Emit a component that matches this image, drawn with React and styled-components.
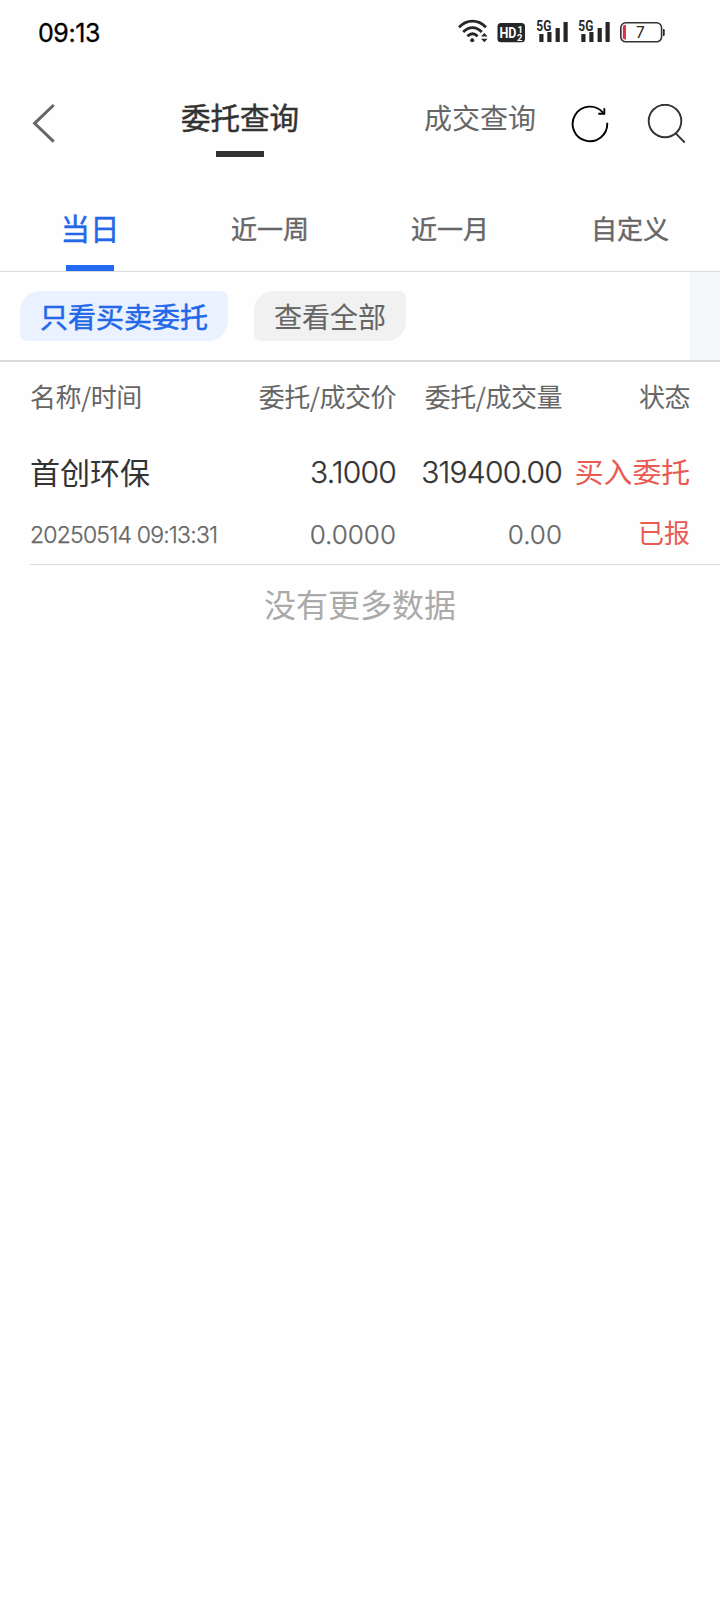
import React, {useState} from 'react';
import styled, {createGlobalStyle} from 'styled-components';

const GlobalStyle = createGlobalStyle`
    body {
        margin: 0;
        background-color: #fefefe;
    }
    * {
        box-sizing: border-box;
    }
`;

const Page = styled.div`
    width: 720px;
    min-height: 1612px;
    display: flex;
    flex-direction: column;
    background-color: #fefefe;
    color: #666;
    font-family: 'Noto Sans CJK SC', sans-serif;
    white-space: nowrap;
`;

const StatusBar = styled.div`
    height: 64px;
    padding: 0 55px 0 38px;
    display: flex;
    align-items: center;
    justify-content: space-between;
`;

const Clock = styled.span`
    padding-top: 2px;
    font-family: Inter, sans-serif;
    font-size: 25px;
    font-weight: 400;
    letter-spacing: -0.4px;
    color: #000;
    -webkit-text-stroke: 0.3px;
`;

const Header = styled.div`
    height: 120px;
    display: flex;
    align-items: center;
`;

const BackButton = styled.div`
    width: 120px;
    padding: 0 0 2px 32px;
    display: flex;
`;

const PageTab = styled.div`
    width: ${props=>props.$width};
    margin-left: ${props=>props.$gap || '0'};
    height: 100%;
    padding-top: ${props=>props.$active ? '30px' : '31px'};
    display: flex;
    flex-direction: column;
    align-items: center;
    font-size: ${props=>props.$active ? '29.5px' : '28px'};
    line-height: 44px;
    color: ${props=>props.$active ? '#333' : '#666'};
    -webkit-text-stroke: ${props=>props.$active ? '0.5px' : '0'};
`;

const PageTabLine = styled.div`
    width: 48px;
    height: 6px;
    margin-top: 13px;
    background-color: #333;
`;

const HeaderIcons = styled.div`
    display: flex;
    margin-left: 25px;
    gap: 36px;
`;

const RangeTabs = styled.div`
    height: 88px;
    display: grid;
    grid-template-columns: repeat(4, 1fr);
    border-bottom: 1px solid #d9dadc;
`;

const RangeTab = styled.div`
    display: flex;
    flex-direction: column;
    align-items: center;
    justify-content: space-between;
    padding-top: ${props=>props.$active ? '23px' : '24px'};
    font-size: ${props=>props.$active ? '29.5px' : '26px'};
    line-height: 40px;
    color: ${props=>props.$active ? '#2268e8' : '#666'};
    -webkit-text-stroke: 0.4px;
`;

const RangeLine = styled.div`
    width: 48px;
    height: 6px;
    background-color: #226af2;
`;

const FilterRow = styled.div`
    height: 90px;
    display: flex;
    align-items: center;
    gap: 26px;
    padding-left: 20px;
    border-bottom: 2px solid #d9d9d9;
`;

const Chip = styled.div`
    height: 50px;
    padding: 0 20px;
    border-radius: 20px 7px 20px 7px;
    font-size: 28px;
    line-height: 50px;
    background-color: ${props=>props.$active ? '#ebf2ff' : '#f1f1f1'};
    color: ${props=>props.$active ? '#2268e8' : '#666'};
    -webkit-text-stroke: ${props=>props.$active ? '0.5px' : '0.1px'};
`;

const FilterEdge = styled.div`
    width: 30px;
    height: 100%;
    margin-left: auto;
    background-color: #f4f6f9;
`;

const TableRow = styled.div`
    display: grid;
    grid-template-columns: 200px 166px 166px 128px;
    align-items: center;
    height: ${props=>props.$height};
    margin-left: 30px;
`;

const Cell = styled.div`
    text-align: ${props=>props.$left ? 'left' : 'right'};
    font-size: ${props=>props.$size || '26px'};
    color: ${props=>props.$color || '#666'};
`;

const HeadCell = styled(Cell)`
    letter-spacing: -0.5px;
`;

const NumberCell = styled(Cell)`
    padding-top: ${props=>props.$top || '3px'};
    font-family: Inter, sans-serif;
    font-weight: 300;
    letter-spacing: ${props=>props.$spacing || '0'};
    -webkit-text-stroke: 0.25px;
`;

const Order = styled.div`
    border-bottom: 1px solid #d9d9d9;
    margin-left: 30px;
    height: 136px;

    ${TableRow} {
        margin-left: 0;
    }
`;

const Footer = styled.div`
    padding-top: 14px;
    text-align: center;
    font-size: 32px;
    line-height: 48px;
    color: #aaa;
`;

const StatusIcons = () => (
    <svg width="208" height="26" viewBox="457 19 208 26" fill="#262626">
        <g fill="none" stroke="#262626" strokeWidth="2.8">
            <path d="M459 27.2C467 19.2 478 19.2 486 27.2" />
            <path d="M463.2 32C469 26.2 476 26.2 481.8 32" />
            <path d="M467.4 36.3C470.7 33 474.3 33 477.6 36.3" />
        </g>
        <circle cx="472.2" cy="40.3" r="2" />
        <path d="M481 36.4l3.3-3.4 3.3 3.4zM481 38.8l3.3 3.4 3.3-3.4z" />
        <rect x="497.5" y="23" width="27.5" height="19.2" rx="3.5" />
        <g fill="#fff" fontFamily="Roboto, sans-serif" fontWeight="700">
            <text x="499.5" y="38" fontSize="14.5" textLength="17" lengthAdjust="spacingAndGlyphs">HD</text>
            <text x="517.5" y="32.5" fontSize="9.5">1</text>
            <text x="517" y="40.5" fontSize="9.5">2</text>
        </g>
        {[0, 42].map((x) => (
            <g key={x} transform={`translate(${x} 0)`}>
                <text x="536.3" y="30.8" fontSize="14" fontFamily="Roboto, sans-serif" fontWeight="700" textLength="15" lengthAdjust="spacingAndGlyphs">5G</text>
                <rect x="539.3" y="34" width="4.2" height="8" rx="0.6" />
                <rect x="547.3" y="32" width="4.2" height="10" rx="0.6" />
                <rect x="555.6" y="28" width="4.2" height="14" rx="0.6" />
                <rect x="563.5" y="22" width="4.2" height="20" rx="0.6" />
            </g>
        ))}
        <rect x="620.8" y="22.8" width="40.8" height="19" rx="5" fill="#fff" stroke="#333" strokeWidth="1.6" />
        <path d="M663 29h0.5a1.2 1.2 0 0 1 1.2 1.2v4.6a1.2 1.2 0 0 1-1.2 1.2H663z" />
        <path d="M626 25v14.5h-1.2a2 2 0 0 1-2-2V27a2 2 0 0 1 2-2z" fill="#d9394c" />
        <text x="636" y="37.8" fontSize="15.5" fontFamily="Inter, sans-serif">7</text>
    </svg>
);

const BackIcon = () => (
    <svg width="24" height="40" viewBox="32 103 24 40" fill="none" stroke="#666" strokeWidth="3">
        <path d="M53.7 105L34.6 123.3L53.7 141.6" />
    </svg>
);

const RefreshIcon = () => (
    <svg width="40" height="40" viewBox="570 104 40 40" fill="none" stroke="#000" strokeWidth="1.9">
        <path d="M607.2 122.8A17.3 17.3 0 1 1 603.2 112.8" />
        <path d="M604.3 108.3V113.8H598.3" />
    </svg>
);

const SearchIcon = () => (
    <svg width="40" height="40" viewBox="646 104 40 40" fill="none" stroke="#333" strokeWidth="1.9">
        <circle cx="665" cy="121" r="16.3" />
        <path d="M675.5 133.2L684.7 142.5" />
    </svg>
);

const ranges = ['当日', '近一周', '近一月', '自定义'];
const filters = ['只看买卖委托', '查看全部'];

const App = () => {
    const [range, setRange] = useState(0);
    const [filter, setFilter] = useState(0);

    return <Page>
        <GlobalStyle />
        <StatusBar>
            <Clock>09:13</Clock>
            <StatusIcons />
        </StatusBar>
        <Header>
            <BackButton><BackIcon /></BackButton>
            <PageTab $width="240px" $active>
                委托查询
                <PageTabLine />
            </PageTab>
            <PageTab $width="130px" $gap="55px">成交查询</PageTab>
            <HeaderIcons>
                <RefreshIcon />
                <SearchIcon />
            </HeaderIcons>
        </Header>
        <RangeTabs>
            {ranges.map((name, i) => (
                <RangeTab key={name} $active={i === range} onClick={() => setRange(i)}>
                    {name}
                    {i === range && <RangeLine />}
                </RangeTab>
            ))}
        </RangeTabs>
        <FilterRow>
            {filters.map((name, i) => (
                <Chip key={name} $active={i === filter} onClick={() => setFilter(i)}>{name}</Chip>
            ))}
            <FilterEdge />
        </FilterRow>
        <TableRow $height="67px">
            <HeadCell $left>名称/时间</HeadCell>
            <HeadCell>委托/成交价</HeadCell>
            <HeadCell>委托/成交量</HeadCell>
            <HeadCell>状态</HeadCell>
        </TableRow>
        <Order>
            <TableRow $height="83px">
                <Cell $left $size="30px" $color="#333">首创环保</Cell>
                <NumberCell $size="30px" $color="#333" $spacing="-0.8px">3.1000</NumberCell>
                <NumberCell $size="30px" $color="#333" $spacing="-0.8px">319400.00</NumberCell>
                <Cell $size="28.8px" $color="#e85a52">买入委托</Cell>
            </TableRow>
            <TableRow $height="38px">
                <NumberCell $left $size="23px" $spacing="-0.8px" $top="7px">20250514 09:13:31</NumberCell>
                <NumberCell $top="7px">0.0000</NumberCell>
                <NumberCell $top="7px">0.00</NumberCell>
                <Cell $color="#e85a52">已报</Cell>
            </TableRow>
        </Order>
        <Footer>没有更多数据</Footer>
    </Page>
}

export default App;
